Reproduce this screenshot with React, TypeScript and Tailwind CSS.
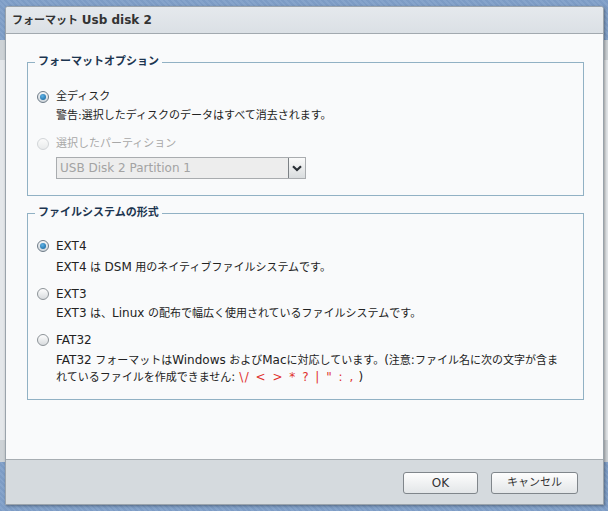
import React from "react";

const FONT = { fontFamily: '"DejaVu Sans", "Noto Sans CJK JP", sans-serif' };

function Radio({ state }: { state: "on" | "off" | "disabled" }) {
  if (state === "on") {
    return (
      <span className="flex h-[12px] w-[12px] shrink-0 items-center justify-center rounded-full border border-[#6f7c88] bg-[linear-gradient(#f4f6f8,#cfd6dc)]">
        <span className="h-[6px] w-[6px] rounded-full bg-[radial-gradient(circle_at_40%_35%,#5fb2e6,#0f5f98)]" />
      </span>
    );
  }
  if (state === "disabled") {
    return (
      <span className="h-[12px] w-[12px] shrink-0 rounded-full border border-[#d2d5d8] bg-[linear-gradient(#fbfbfb,#e9ebec)]" />
    );
  }
  return (
    <span className="h-[12px] w-[12px] shrink-0 rounded-full border border-[#8d9398] bg-[linear-gradient(#fdfdfd,#d8dbde)]" />
  );
}

const L = ({ children }: { children: React.ReactNode }) => (
  <span className="text-[12px]">{children}</span>
);

export default function App() {
  return (
    <div
      className="relative h-[511px] w-[608px] overflow-hidden bg-[repeating-linear-gradient(45deg,#7d9cc5_0px,#7d9cc5_2px,#86a4cb_2px,#86a4cb_4px)] text-[11px] text-[#222]"
      style={FONT}
    >
      {/* window behind */}
      <div className="absolute left-0 top-[40px] h-[422px] w-[608px] bg-[#cdd2d6]">
        <div className="mt-[20px] h-[380px] w-[608px] bg-[#e4e7ea]" />
      </div>

      {/* dialog */}
      <div className="absolute left-[5px] top-[6px] flex h-[499px] w-[599px] flex-col overflow-hidden rounded-t-[3px] border border-[#9aa3ab] bg-[#f9fafb] shadow-[1px_1px_3px_rgba(0,0,0,0.35)]">
        {/* title bar */}
        <div className="flex h-[27px] shrink-0 items-center border-b border-[#a2a9af] bg-[linear-gradient(#e5e9ed,#dbe0e5)] pl-[6px]">
          <span className="text-[11px] font-bold text-[#333]">
            フォーマット <span className="text-[12px]">Usb disk 2</span>
          </span>
        </div>

        {/* body */}
        <div className="flex flex-1 flex-col pl-[21px] pt-[20px]">
          <fieldset className="w-[557px] border border-[#91b1c4] pb-[16px] pl-[9px]">
            <legend className="ml-[-2px] px-[3px] text-[11px] font-bold leading-[16px] text-[#1c3550]">
              フォーマットオプション
            </legend>
            <div className="mt-[17px] flex h-[20px] items-center gap-[7px]">
              <Radio state="on" />
              <span>全ディスク</span>
            </div>
            <div className="flex h-[18px] items-center pl-[19px]">
              警告:選択したディスクのデータはすべて消去されます。
            </div>
            <div className="mt-[9px] flex h-[20px] items-center gap-[7px]">
              <Radio state="disabled" />
              <span className="text-[#a8a8a8]">選択したパーティション</span>
            </div>
            <div className="ml-[19px] mt-[3px] flex h-[22px] w-[250px] border border-[#a9acaf] bg-[#ededed]">
              <div className="flex flex-1 items-center pl-[3px] text-[12px] text-[#a3a3a3]">
                USB Disk 2 Partition 1
              </div>
              <div className="flex w-[17px] items-center justify-center border-l border-[#7c8185] bg-[linear-gradient(#fafafa,#d9dcde)]">
                <svg width="10" height="7" viewBox="0 0 10 7">
                  <path d="M1 1.2 L5 5 L9 1.2" fill="none" stroke="#2b3036" strokeWidth="2.2" />
                </svg>
              </div>
            </div>
          </fieldset>

          <fieldset className="mt-[9px] w-[557px] border border-[#91b1c4] pb-[13px] pl-[9px]">
            <legend className="ml-[-2px] px-[3px] text-[11px] font-bold leading-[16px] text-[#1c3550]">
              ファイルシステムの形式
            </legend>
            <div className="mt-[15px] flex h-[20px] items-center gap-[7px]">
              <Radio state="on" />
              <L>EXT4</L>
            </div>
            <div className="mt-[2px] flex h-[18px] items-center pl-[19px]">
              <span>
                <L>EXT4</L> は <L>DSM</L> 用のネイティブファイルシステムです。
              </span>
            </div>
            <div className="mt-[8px] flex h-[20px] items-center gap-[7px]">
              <Radio state="off" />
              <L>EXT3</L>
            </div>
            <div className="flex h-[18px] items-center pl-[19px]">
              <span>
                <L>EXT3</L> は、<L>Linux</L> の配布で幅広く使用されているファイルシステムです。
              </span>
            </div>
            <div className="mt-[8px] flex h-[20px] items-center gap-[7px]">
              <Radio state="off" />
              <L>FAT32</L>
            </div>
            <div className="mt-[2px] w-[530px] pl-[19px] leading-[16px]">
              <L>FAT32</L> フォーマットは<L>Windows</L> および<L>Mac</L>に対応しています。<L>(</L>注意<L>:</L>ファイル名に次の文字が含まれているファイルを作成できません<L>: </L>
              <span className="text-[12px] tracking-[1.5px] text-[#e0302c]">{"\\/ < > * ? | \" : ,"}</span>
              <L>  )</L>
            </div>
          </fieldset>
        </div>

        {/* footer */}
        <div className="flex h-[45px] shrink-0 items-start justify-end gap-[13px] border-t border-[#a7adb2] bg-[#d5dade] pr-[25px] pt-[12px]">
          <button className="h-[22px] w-[75px] rounded-[3px] border border-[#80868b] bg-[linear-gradient(#fdfdfd,#e3e6e8)] text-[12px] text-[#333]">
            OK
          </button>
          <button className="h-[22px] w-[87px] rounded-[3px] border border-[#80868b] bg-[linear-gradient(#fdfdfd,#e3e6e8)] text-[11px] text-[#333]">
            キャンセル
          </button>
        </div>
      </div>
    </div>
  );
}
